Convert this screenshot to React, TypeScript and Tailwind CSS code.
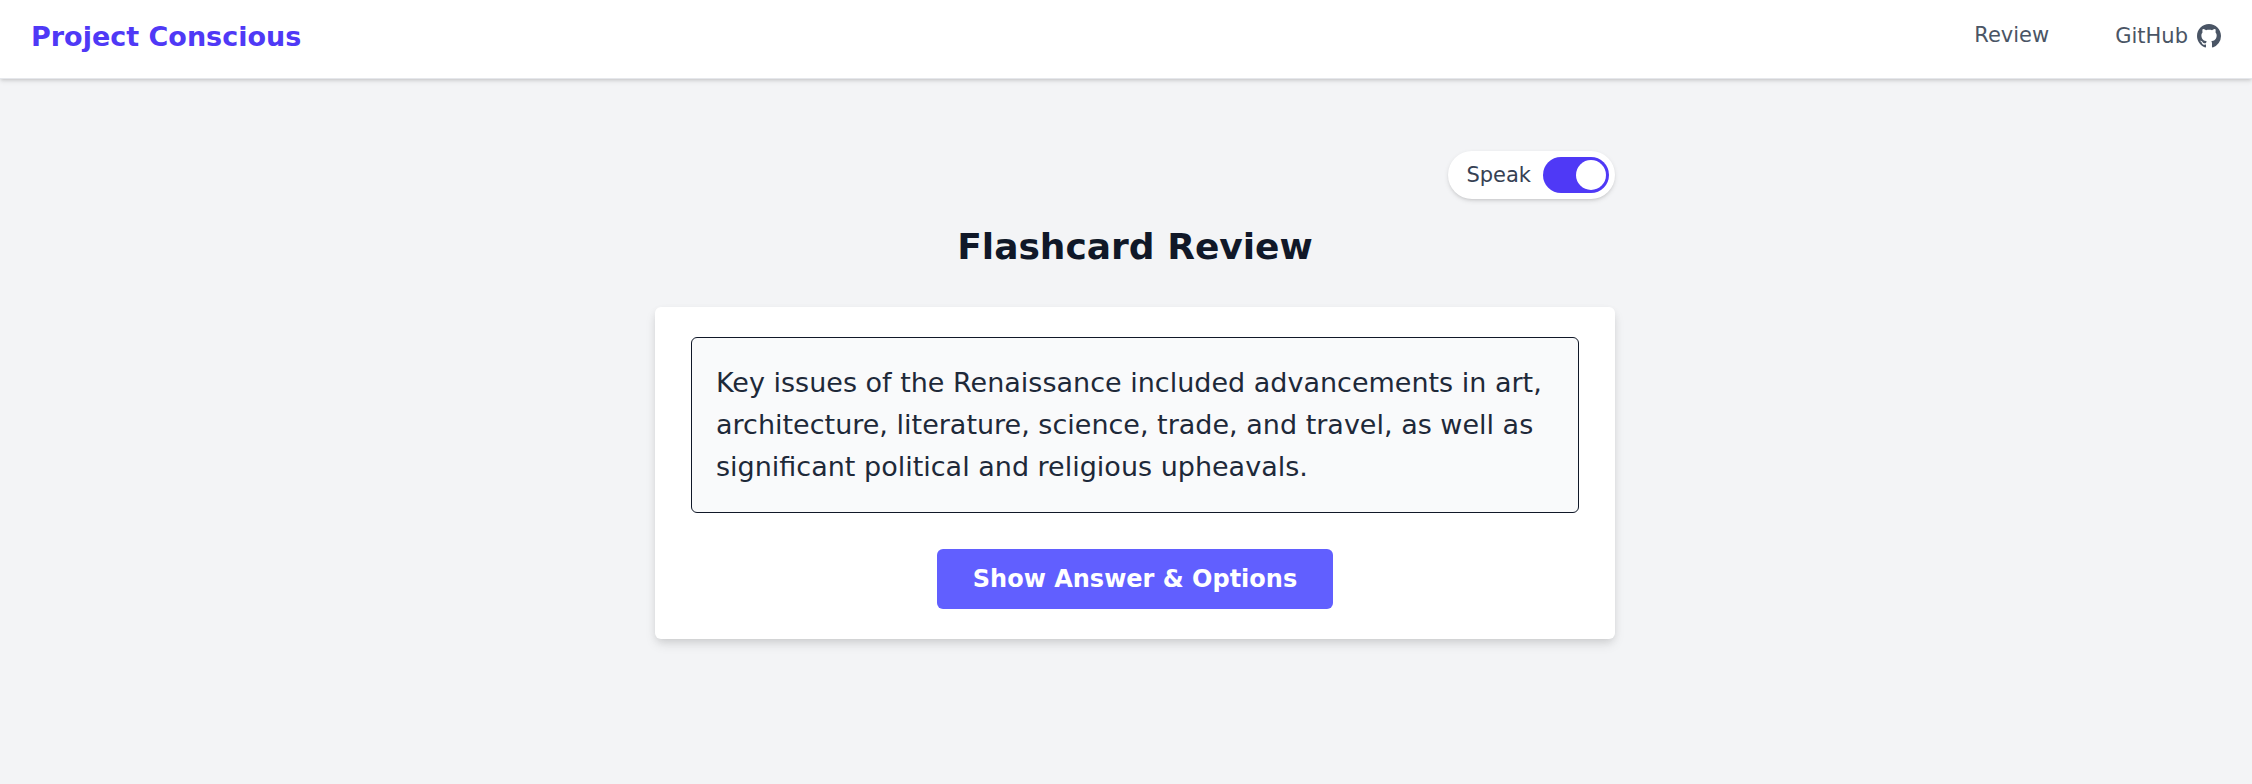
import { useState } from 'react'

const card = {
  question:
    'Key issues of the Renaissance included advancements in art, architecture, literature, science, trade, and travel, as well as significant political and religious upheavals.',
}

function GitHubIcon() {
  return (
    <svg className="w-6 h-6" viewBox="0 0 16 16" fill="currentColor" aria-hidden="true">
      <path d="M8 0C3.58 0 0 3.58 0 8c0 3.54 2.29 6.53 5.47 7.59.4.07.55-.17.55-.38 0-.19-.01-.82-.01-1.49-2.01.37-2.53-.49-2.69-.94-.09-.23-.48-.94-.82-1.13-.28-.15-.68-.52-.01-.53.63-.01 1.08.58 1.23.82.72 1.21 1.87.87 2.33.66.07-.52.28-.87.51-1.07-1.78-.2-3.64-.89-3.64-3.95 0-.87.31-1.59.82-2.15-.08-.2-.36-1.02.08-2.12 0 0 .67-.21 2.2.82.64-.18 1.32-.27 2-.27.68 0 1.36.09 2 .27 1.53-1.04 2.2-.82 2.2-.82.44 1.1.16 1.92.08 2.12.51.56.82 1.27.82 2.15 0 3.07-1.87 3.75-3.65 3.95.29.25.54.73.54 1.48 0 1.07-.01 1.93-.01 2.2 0 .21.15.46.55.38A8.013 8.013 0 0 0 16 8c0-4.42-3.58-8-8-8z" />
    </svg>
  )
}

function Header() {
  return (
    <header className="bg-white border-b border-gray-200 shadow-[0_2px_5px_0_rgba(0,0,0,0.1),0_2px_3px_-1px_rgba(0,0,0,0.1)]">
      <div className="flex items-start justify-between px-[31px] pt-[18px] pb-[22px]">
        <a href="#" className="text-[27px] leading-[38px] font-extrabold text-indigo-600">
          Project Conscious
        </a>
        <nav className="flex items-start gap-[66px] text-[21px] text-gray-600">
          <a href="#review" className="leading-[34px] hover:text-indigo-600">
            Review
          </a>
          <a href="#github" className="flex items-center gap-[9px] leading-9 hover:text-indigo-600">
            GitHub
            <GitHubIcon />
          </a>
        </nav>
      </div>
    </header>
  )
}

function SpeakToggle() {
  const [speak, setSpeak] = useState(true)

  return (
    <div className="flex items-center gap-3 rounded-full bg-white py-[6px] pl-[18px] pr-[6px] shadow-[0_2px_5px_0_rgba(0,0,0,0.1),0_2px_3px_-1px_rgba(0,0,0,0.1)]">
      <label htmlFor="speak" className="text-[21px] leading-[30px] text-gray-700">
        Speak
      </label>
      <input
        id="speak"
        type="checkbox"
        role="switch"
        checked={speak}
        onChange={(e) => setSpeak(e.target.checked)}
        className="flex h-9 w-[66px] cursor-pointer appearance-none items-center rounded-full bg-gray-300 px-[3px] checked:justify-end checked:bg-indigo-600 before:block before:size-[30px] before:rounded-full before:bg-white before:content-['']"
      />
    </div>
  )
}

export default function App() {
  const [revealed, setRevealed] = useState(false)

  return (
    <div className="min-h-screen bg-gray-100 font-['DejaVu_Sans',sans-serif]">
      <Header />
      <main className="pt-[72px] pb-12 pl-[42px] pr-6">
        <div className="mx-auto w-full max-w-[960px]">
          <div className="mb-6 flex justify-end">
            <SpeakToggle />
          </div>
          <h1 className="mb-9 text-center text-4xl leading-[48px] font-bold text-gray-900">
            Flashcard Review
          </h1>
          <section className="rounded-md bg-white px-9 py-[30px] shadow-[0_6px_12px_-1px_rgba(0,0,0,0.1),0_3px_8px_-2px_rgba(0,0,0,0.1)]">
            <div className="mb-9 rounded-md border border-gray-900 bg-gray-50 p-6">
              <p className="text-[27px] leading-[42px] text-gray-800">{card.question}</p>
            </div>
            <div className="flex justify-center">
              <button
                type="button"
                aria-pressed={revealed}
                onClick={() => setRevealed(!revealed)}
                className="cursor-pointer rounded-md bg-indigo-500 px-9 py-3 text-2xl leading-9 font-semibold text-white hover:bg-indigo-600"
              >
                Show Answer &amp; Options
              </button>
            </div>
          </section>
        </div>
      </main>
    </div>
  )
}
